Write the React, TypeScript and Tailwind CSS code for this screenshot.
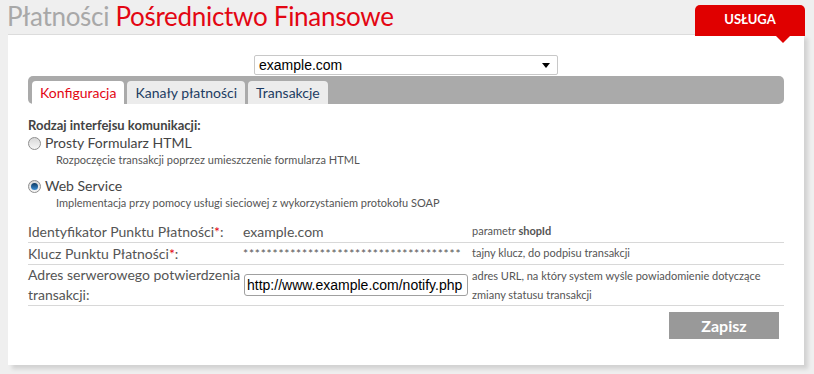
import React, { useState } from "react";

const FONT = "font-['Lato','Open_Sans',sans-serif]";

function Radio({ checked }: { checked: boolean }) {
  return (
    <span className="relative inline-flex h-[13px] w-[13px] shrink-0 items-center justify-center rounded-full border border-[#8e8e8e] bg-gradient-to-b from-[#d8d8d8] to-[#f6f6f6]">
      {checked && (
        <span className="h-[7px] w-[7px] rounded-full bg-gradient-to-b from-[#0d3a63] to-[#3b8fd6]" />
      )}
    </span>
  );
}

export default function App() {
  const [mode, setMode] = useState<"html" | "ws">("ws");
  const [tab, setTab] = useState("Konfiguracja");
  const [url, setUrl] = useState("http://www.example.com/notify.php");
  const tabs = ["Konfiguracja", "Kanały płatności", "Transakcje"];

  return (
    <div className={`relative h-[374px] w-[814px] overflow-hidden bg-[#efefef] ${FONT}`}>
      {/* Header */}
      <div className="flex h-[34px] items-start">
        <h1 className="pl-[7px] pt-[1px] text-[26px] leading-[30px] tracking-[-0.3px]">
          <span className="text-[#a8a8a8]">Płatności</span>{" "}
          <span className="text-[#e30613]">Pośrednictwo Finansowe</span>
        </h1>
        <div className="relative z-10 ml-auto mr-[9px] mt-[5px] flex h-[31px] w-[110px] justify-center rounded-t-[5px] bg-[#e00000] pt-[6px] text-[13px] font-bold leading-[16px] text-white">
          USŁUGA
          <span className="absolute bottom-[-7px] right-[15px] h-0 w-0 border-x-[7px] border-t-[7px] border-x-transparent border-t-[#e00000]" />
        </div>
      </div>

      {/* Panel */}
      <div className="ml-[8px] h-[331px] w-[796px] border-t border-[#dcdcdc] bg-white px-[20px] shadow-[4px_4px_4px_rgba(0,0,0,0.12)]">
        <div className="flex justify-center pt-[20px]">
          <div className="flex h-[20px] w-[304px] items-center justify-between rounded-[2px] border border-[#c8c8c8] bg-white pl-[4px] pr-[7px] font-['Liberation_Sans',Arial,sans-serif] text-[14px] text-black">
            <span>example.com</span>
            <span className="h-0 w-0 border-x-[4px] border-t-[5px] border-x-transparent border-t-black" />
          </div>
        </div>

        {/* Tabs */}
        <div className="mt-[1px] flex h-[28px] items-end gap-[3px] rounded-[5px] bg-[#aaaaaa] pl-[4px]">
          {tabs.map((t) => (
            <button
              key={t}
              onClick={() => setTab(t)}
              className={`flex h-[23px] items-center rounded-t-[4px] px-[8px] pt-[1px] text-[14px] leading-none ${
                tab === t ? "bg-white text-[#e30613]" : "bg-[#ececec] text-[#1d3c63]"
              }`}
            >
              {t}
            </button>
          ))}
        </div>

        {/* Interface type */}
        <div className="pt-[13px] text-[#444]">
          <div className="text-[13px] font-bold leading-[16px]">Rodzaj interfejsu komunikacji:</div>
          <label className="mt-[1px] flex items-center gap-[4px] text-[14px] leading-[18px]" onClick={() => setMode("html")}>
            <Radio checked={mode === "html"} />
            Prosty Formularz HTML
          </label>
          <div className="pl-[28px] text-[11px] leading-[16px] text-[#555]">
            Rozpoczęcie transakcji poprzez umieszczenie formularza HTML
          </div>
          <label className="mt-[9px] flex items-center gap-[4px] text-[14px] leading-[18px]" onClick={() => setMode("ws")}>
            <Radio checked={mode === "ws"} />
            Web Service
          </label>
          <div className="pl-[28px] text-[11px] leading-[16px] text-[#555]">
            Implementacja przy pomocy usługi sieciowej z wykorzystaniem protokołu SOAP
          </div>
        </div>

        {/* Table */}
        <div className="mt-[10px] text-[#555]">
          <div className="grid h-[22px] grid-cols-[215px_229px_1fr] items-center border-b border-[#d8d8d8]">
            <div className="text-[14px]">
              Identyfikator Punktu Płatności<span className="text-[#e30613]">*</span>:
            </div>
            <div className="text-[14px]">example.com</div>
            <div className="text-[11px]">
              parametr <b>shopId</b>
            </div>
          </div>
          <div className="grid h-[22px] grid-cols-[215px_229px_1fr] items-center border-b border-[#d8d8d8]">
            <div className="text-[14px]">
              Klucz Punktu Płatności<span className="text-[#e30613]">*</span>:
            </div>
            <div className="text-[12px] tracking-[0.8px]">*************************************</div>
            <div className="text-[11px]">tajny klucz, do podpisu transakcji</div>
          </div>
          <div className="grid h-[41px] grid-cols-[215px_229px_1fr] items-center border-b border-[#d8d8d8]">
            <div className="text-[14px] leading-[20px]">
              Adres serwerowego potwierdzenia
              <br />
              transakcji:
            </div>
            <input
              value={url}
              onChange={(e) => setUrl(e.target.value)}
              className="ml-[1px] h-[22px] w-[224px] rounded-[3px] border border-[#a0a0a0] px-[2px] font-['Liberation_Sans',Arial,sans-serif] text-[14px] text-black outline-none"
            />
            <div className="text-[11px] leading-[19px]">
              adres URL, na który system wyśle powiadomienie dotyczące
              <br />
              zmiany statusu transakcji
            </div>
          </div>
        </div>

        <div className="flex justify-end pr-[5px] pt-[6px]">
          <button className="h-[27px] w-[110px] bg-[#999999] text-[16px] font-bold text-white">Zapisz</button>
        </div>
      </div>
    </div>
  );
}
